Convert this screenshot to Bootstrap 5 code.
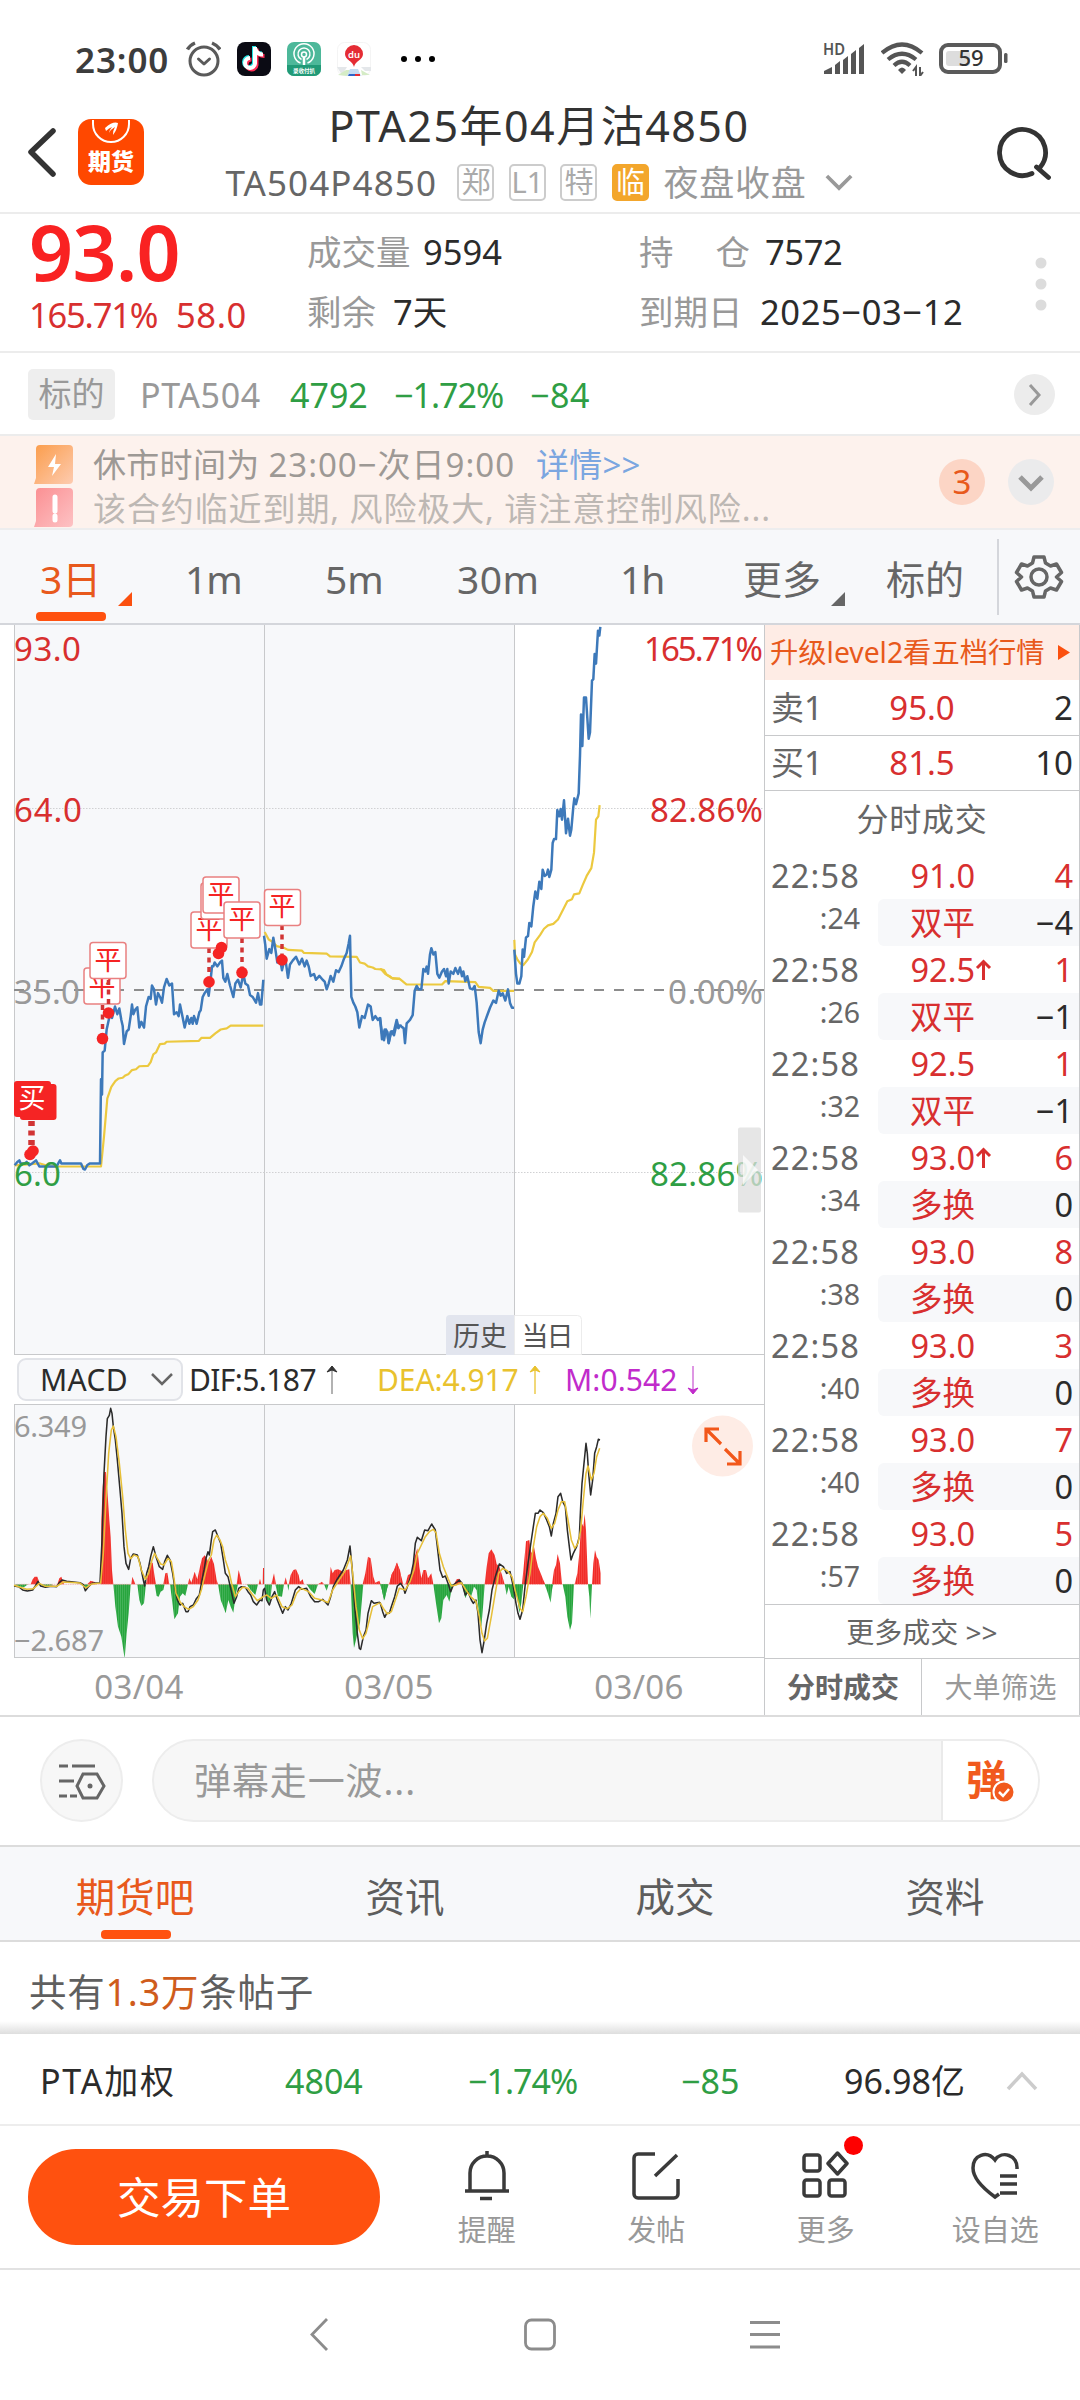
<!DOCTYPE html>
<html lang="zh-CN">
<head>
<meta charset="utf-8">
<meta name="viewport" content="width=device-width, initial-scale=1">
<title>PTA25年04月沽4850</title>
<link href="https://cdn.jsdelivr.net/npm/bootstrap@5.3.0/dist/css/bootstrap.min.css" rel="stylesheet">
<style>
:root{--or:#fb500f;--red:#d82f2f;--gr:#2f9e44;--tx:#2b2b2b;--mid:#666;--dim:#999;--ln:#c8c9cb;--pale:#f7f8fa}
body{width:1080px;height:2400px;margin:0;background:#fff;color:var(--tx);font-family:"Noto Sans","Noto Sans CJK SC",sans-serif;overflow:hidden;line-height:1;white-space:nowrap}
svg{display:block;flex:none}
svg text{font-family:"Noto Sans","Noto Sans CJK SC",sans-serif}
.t-or{color:#e8591c}.t-red{color:var(--red)}.t-gr{color:var(--gr)}.t-mid{color:var(--mid)}.t-dim{color:var(--dim)}
.statusbar{height:96px;padding:22px 71px 0 75px}
.clock{font-size:35px;font-weight:600;color:#3c3c3c;width:111px;letter-spacing:.9px}
.titlebar{height:118px;padding:0 29px 0 27px;border-bottom:2px solid #ececec}
.titlebar .name{font-size:43px;height:60px;line-height:60px;color:#333;letter-spacing:1.5px}
.titlebar .sub{height:52px;font-size:35px;color:var(--mid)}
.tagbox{width:37px;height:37px;border:2px solid #ccc;border-radius:5px;font-size:29px;line-height:32px;color:#aaa;text-align:center;margin-right:14.5px}
.tagbox.hot{background:#f3a62c;border-color:#f3a62c;color:#fff}
.quote{height:139px;border-bottom:2px solid #ececec;padding:0 28px 0 29px}
.quote .q1{width:278px}.quote .q2{width:332px}
.big{font-size:77px;font-weight:600;color:#f92222;line-height:76px;height:76px;letter-spacing:-.6px}
.qline{height:60px;font-size:34.5px;display:flex;align-items:center}
.under{height:83px;padding:2px 25px 0 28px;border-bottom:2px solid #ececec;font-size:34px}
.tag-under{width:87px;height:51px;background:#eee;border-radius:5px;font-size:33px;line-height:50px;color:#999;text-align:center}
.notice{height:94px;background:#fdf2ed;border-bottom:2px solid #ededee;padding:5px 26px 0 34px;overflow:hidden;font-size:33px}
.notice .ln{height:47px}
.notice .ln+.ln{height:40px}
.rnd{width:46px;height:46px;border-radius:50%}
.periods{height:95px;background:var(--pale);border-bottom:2px solid #d4d6db;font-size:39px;color:var(--mid)}
.periods>div{height:100%;display:flex;align-items:center;position:relative;padding-top:3px}
.bar{position:absolute;height:9px;width:70px;border-radius:4px;background:#ff510f}
.tri{position:absolute;width:14px;height:14px;clip-path:polygon(100% 0,100% 100%,0 100%);background:#666;top:62px}
.chartcol{width:764px}
.ind{height:49px;font-size:30px}
.ind .pick{width:166px;height:43px;margin-left:17px;border:2px solid #e1e3e8;border-radius:9px;background:var(--pale);padding:0 8px 0 21px}
.dates{height:57px;padding-left:14px;font-size:33px;color:var(--dim);letter-spacing:.3px}
.book{width:316px;border-left:1.5px solid var(--ln);border-right:1.5px solid var(--ln)}
.lvl{height:55px;background:#feece5;font-size:28.3px;padding:0 9px 0 5px}
.bk{height:55.5px;border-bottom:1.5px solid var(--ln);font-size:33px;padding:0 6px 0 6px}
.bk .w1{width:93px}.bk .w2{width:116px;text-align:center}
.tick{height:94px;font-size:32.5px}
.tick .tl{width:95px;margin-right:18px}
.tick .tr{flex:1}
.tick .hh{height:47px;line-height:47px}
.tick .ss{font-size:28.5px;height:47px;line-height:39px}
.tick .lo{background:var(--pale);border-radius:6px 0 0 6px}
.tick .p{width:97px;text-align:right}
.tick .q{padding-right:6px;color:var(--tx)}
.tick .q.buy{color:var(--red)}
.book .foot{height:57px;font-size:28px}
.danmu{height:132px;border-top:2px solid #dcdcdc;border-bottom:2px solid #dcdcdc;padding:0 40px 1px 40px}
.dm-c{width:83px;height:83px;border:2px solid #ededed;border-radius:50%;background:#f7f7f7;padding:0}
.dm-i{width:888px;height:83px;border:2px solid #ededed;border-radius:42px;background:#f7f7f7;overflow:hidden;margin-left:29px;font-size:37px;color:#999}
.dm-i .send{width:97px;background:#fff;border-left:2px solid #eaeaea}
.subtabs{height:95px;background:var(--pale);border-bottom:2px solid #dcdcdc;font-size:39.5px;color:#5d5d5d}
.subtabs>div{position:relative;width:270px;text-align:center;line-height:100px}
.posts{height:92px;padding:0 29px;font-size:37.5px;line-height:100px;color:#5f5f5f;letter-spacing:.8px;background:linear-gradient(#fff 86%,#dedede)}
.wtd{height:92px;border-bottom:2px solid #ededed;font-size:34px;color:#2b2b2b;padding:3px 0 0 40px}
.acts{height:144px;border-bottom:2px solid #e2e2e2;padding-left:28px}
.order{width:352px;height:96px;border-radius:48px;background:#ff510f;color:#fff;font-size:43.5px;border:0;padding:0;line-height:95px;margin-right:22px}
.act{width:169.5px;font-size:29px;color:#999;position:relative}
.act .lab{margin-top:15px;line-height:28px}
.dotred{position:absolute;width:19px;height:19px;border-radius:50%;background:#fe0000;left:103px;top:-15px}
</style>
<script src="https://cdn.jsdelivr.net/npm/bootstrap@5.3.0/dist/js/bootstrap.bundle.min.js"></script>
</head>
<body>
<!-- status bar -->
<div class="statusbar d-flex align-items-center">
  <div class="clock">23:00</div>
  <svg width="35" height="36" viewBox="0 0 35 36" fill="none" stroke="#5a5a5a" stroke-width="3"><circle cx="18" cy="20" r="14"/><path d="M1.500 8.500Q4 4 9 2M34 8.500Q31 4 26 2" stroke-width="3.500"/><path d="M12.500 18l5.500 5 5.500-5" stroke-linecap="round" stroke-linejoin="round"/></svg>
  <svg class="ms-3" width="34" height="34" viewBox="0 0 34 34"><rect width="34" height="34" rx="8" fill="#0b0b14"/><g fill="none" stroke-width="4"><path d="M18 5v16.500a5 5 0 1 1-5-5.500M18 6c1 4 4 6.500 8 6.500" stroke="#25e5e5" transform="translate(-1 -1)"/><path d="M18 5v16.500a5 5 0 1 1-5-5.500M18 6c1 4 4 6.500 8 6.500" stroke="#fe2c55" transform="translate(1.500 1.500)"/><path d="M18 5v16.500a5 5 0 1 1-5-5.500M18 6c1 4 4 6.500 8 6.500" stroke="#fff"/></g></svg>
  <svg class="ms-3" width="34" height="34" viewBox="0 0 34 34"><rect width="34" height="34" rx="7" fill="#4db89a"/><path d="M0 23h34v4a7 7 0 0 1-7 7H7a7 7 0 0 1-7-7z" fill="#219a77"/><g fill="none" stroke="#fff" stroke-width="1.500"><path d="M13.500 21a10 10 0 1 1 7 0M14.500 17.500a6 6 0 1 1 5 0"/><circle cx="17" cy="12.500" r="2.500"/><path d="M17 15v8" stroke-width="2.500"/></g><text x="17" y="31" font-size="5.500" font-weight="700" text-anchor="middle" fill="#fff">录收付扒</text></svg>
  <svg class="ms-3" width="34" height="34" viewBox="0 0 34 34"><rect x=".5" y=".5" width="33" height="33" rx="7" fill="#fff" stroke="#f4f4f4"/><path d="M0 25h10l-5 8zM24 25h10v4H28z" fill="#e4e7ea"/><path d="M1 33l8-5h4l-3 6zM24 28l9 5h-8z" fill="#d5ecc6"/><path d="M13 27h8l3 7H10z" fill="#c4dcf3"/><path d="M12 32h6v2h-7z" fill="#2f65c9"/><path d="M18 32h5v2h-5z" fill="#e52c34"/><path d="M17 25c-1-6-9-7-9-13a9 9 0 0 1 18 0c0 6-8 7-9 13z" fill="#e52c34"/><text x="17" y="16" font-size="9.500" font-weight="600" text-anchor="middle" fill="#fff">du</text></svg>
  <svg width="38" height="8" viewBox="0 0 38 8" style="margin-left:28px" fill="#000"><circle cx="5" cy="4" r="3"/><circle cx="19" cy="4" r="3"/><circle cx="33" cy="4" r="3"/></svg>
  <div class="ms-auto d-flex align-items-center">
    <svg width="42" height="36" viewBox="0 -2 42 36" fill="#555"><text x="0" y="12" font-size="15.500" font-weight="600" textLength="22" lengthAdjust="spacingAndGlyphs">HD</text><path d="M1 31v-3l8-4v7zM12 31V22l5-4v13zM20 31V17l5-4v18zM28 31V11l5-4v24zM36 31V5l5-4v30z"/></svg>
    <svg class="ms-3" width="43" height="34" viewBox="0 0 43 34" fill="none" stroke="#555" stroke-width="4.200"><path d="M1 11Q21 -6 41 11M7 17.500Q21 6 35 17.500M13 23.500Q21 16 29 23.500"/><path d="M17 28q4-5 8 0l-4 4z" fill="#555" stroke="none"/><path d="M35 34v-9l-3 4M39 25v9l3-4" stroke-width="2"/></svg>
    <svg width="70" height="32" viewBox="0 0 70 32" style="margin-left:15px"><rect x="2" y="2" width="59" height="27" rx="7" fill="#fff" stroke="#5a5a5a" stroke-width="4"/><rect x="7" y="8" width="24" height="15" rx="3" fill="#ddd"/><rect x="65" y="10" width="3.500" height="10" rx="1.500" fill="#5a5a5a"/><text x="32" y="23" font-size="22" text-anchor="middle" fill="#333" font-weight="500">59</text></svg>
  </div>
</div>
<!-- title bar -->
<div class="titlebar d-flex justify-content-between">
  <div class="d-flex" style="width:200px;padding-top:23px">
    <svg width="30" height="52" viewBox="0 0 30 52" class="mt-2" fill="none" stroke="#333" stroke-width="5.500" stroke-linecap="round" stroke-linejoin="round"><path d="M26 4L4 25l22 22"/></svg>
    <svg width="66" height="66" viewBox="0 0 66 66" style="margin-left:21px"><rect width="66" height="66" rx="13" fill="#ff4800"/><path d="M15 1v4a18 18 0 0 0 36 0V1" fill="none" stroke="#fff" stroke-width="2"/><path d="M27 9q8-7 13-5-1 7-5 12 0-5 2-8-4 2-6 6 1-4 3-6-3 1-6 4z" fill="#fff"/><text x="33" y="51" font-size="23" font-weight="800" textLength="46" text-anchor="middle" fill="#fff">期货</text></svg>
  </div>
  <div class="text-center">
    <div class="name">PTA25年04月沽4850</div>
    <div class="sub d-flex align-items-center"><span style="width:232px;text-align:left;letter-spacing:1.100px">TA504P4850</span><span class="tagbox">郑</span><span class="tagbox">L1</span><span class="tagbox">特</span><span class="tagbox hot">临</span><span class="t-dim" style="letter-spacing:.8px">夜盘收盘</span>
    <svg width="28" height="17" viewBox="0 0 30 18" style="margin-left:18px" fill="none" stroke="#999" stroke-width="4"><path d="M2 2l13 13L28 2"/></svg></div>
  </div>
  <div class="d-flex justify-content-end" style="width:200px;padding-top:31px"><svg width="52" height="54" viewBox="0 0 52 54" overflow="visible" fill="none" stroke="#333" stroke-width="4.800" stroke-linecap="round"><path d="M33 46.500A23 23 0 1 1 41 40.500M37.500 40L49.500 50.500"/></svg></div>
</div>
<!-- quote summary -->
<div class="quote d-flex">
  <div class="q1"><div class="big">93.0</div><div class="t-red d-flex align-items-center" style="height:50px;font-size:34.500px"><span style="width:147px;letter-spacing:-1.200px">165.71%</span><span style="letter-spacing:.6px">58.0</span></div></div>
  <div class="q2 pt-2"><div class="qline"><span class="t-dim" style="width:116px">成交量</span>9594</div><div class="qline"><span class="t-dim" style="width:86px">剩余</span>7天</div></div>
  <div class="pt-2"><div class="qline"><span class="t-dim d-flex justify-content-between" style="width:111px"><span>持</span><span>仓</span></span><span style="margin-left:15px;letter-spacing:-.4px">7572</span></div><div class="qline"><span class="t-dim" style="width:121px">到期日</span><span style="letter-spacing:.6px">2025−03−12</span></div></div>
  <svg class="ms-auto" width="20" height="138" viewBox="0 0 20 138" fill="#dcdcdc"><circle cx="9" cy="49" r="5.500"/><circle cx="9" cy="70" r="5.500"/><circle cx="9" cy="91" r="5.500"/></svg>
</div>
<!-- underlying -->
<div class="under d-flex align-items-center">
  <span class="tag-under">标的</span><span class="t-dim" style="margin-left:25px;width:150px;letter-spacing:.6px">PTA504</span><span class="t-gr" style="width:104px">4792</span><span class="t-gr" style="width:136px;letter-spacing:-1px">−1.72%</span><span class="t-gr" style="letter-spacing:.5px">−84</span>
  <svg class="ms-auto" width="41" height="41" viewBox="0 0 41 41"><circle cx="20.500" cy="20.500" r="20.500" fill="#ececec"/><path d="M16 11l9 10-9 10" fill="none" stroke="#999" stroke-width="3"/></svg>
</div>
<!-- notices -->
<div class="notice d-flex">
  <div class="flex-grow-1">
    <div class="ln d-flex align-items-center"><svg width="40" height="40" viewBox="0 0 40 40"><defs><linearGradient id="ga" x2="1" y2="1"><stop stop-color="#fb9d4b"/><stop offset="1" stop-color="#fdcbb0"/></linearGradient><linearGradient id="gb" x2="1" y2="1"><stop stop-color="#fb8f92"/><stop offset="1" stop-color="#fdc2c4"/></linearGradient></defs><path d="M6 0h29a4 4 0 0 1 4 4v31a4 4 0 0 1-4 4H0l2-6V4a4 4 0 0 1 4-4z" fill="url(#ga)"/><path d="M22 9l-8 13h6l-2 9 9-12h-6z" fill="#fff"/></svg>
      <span style="margin-left:19px;color:#9d9995;letter-spacing:.3px">休市时间为 <span style="letter-spacing:1px">23:00−次日9:00</span></span><span style="color:#7ba6e0;margin-left:21px;letter-spacing:.2px">详情&gt;&gt;</span></div>
    <div class="ln d-flex align-items-center"><svg width="40" height="40" viewBox="0 0 40 40"><path d="M6 0h29a4 4 0 0 1 4 4v31a4 4 0 0 1-4 4H0l2-6V4a4 4 0 0 1 4-4z" fill="url(#gb)"/><path d="M21 9v14M21 28v4" stroke="#fff" stroke-width="5" stroke-linecap="round"/></svg>
      <span style="margin-left:19px;color:#bdb8b4;letter-spacing:.9px">该合约临近到期, 风险极大, 请注意控制风险...</span></div>
  </div>
  <div class="d-flex align-items-center" style="height:82px"><span class="rnd t-or text-center" style="background:#fcd5c5;line-height:45px">3</span>
  <svg width="46" height="46" viewBox="0 0 46 46" style="margin-left:23px"><circle cx="23" cy="23" r="23" fill="#ebebec"/><path d="M12 18l11 11 11-11" fill="none" stroke="#999" stroke-width="5"/></svg></div>
</div>
<!-- period tabs -->
<div class="periods d-flex">
  <div class="t-or" style="width:185px;padding-left:40px">3日<span class="tri" style="left:118px;background:var(--or)"></span><span class="bar" style="left:36px;bottom:2px"></span></div>
  <div style="width:140px;letter-spacing:-1px">1m</div><div style="width:132px">5m</div><div style="width:163px;letter-spacing:.4px">30m</div><div style="width:123px;letter-spacing:-1px">1h</div><div style="width:143px">更多<span class="tri" style="left:88px"></span></div><div style="width:111px">标的</div>
  <div class="flex-grow-1 justify-content-center pt-0"><svg width="83" height="76" viewBox="0 0 83 76" fill="none" stroke="#666" stroke-width="3.500"><path d="M1 0v76" stroke="#d4d6db" stroke-width="2"/><g transform="translate(42 38)"><path stroke-linejoin="round" d="M-5-20h10l1.500 6 5 3 6-2 5 8.500-5 4.500v0l5 4.500-5 8.500-6-2-5 3-1.500 6H-5l-1.500-6-5-3-6 2-5-8.500 5-4.500-5-4.500 5-8.500 6 2 5-3z"/><circle r="8"/></g></svg></div>
</div>
<!-- charts and order book -->
<div class="d-flex" style="height:1090px">
  <div class="chartcol">
    <svg width="764" height="730" viewBox="0 625 764 730" font-size="33">
      <rect x="14" y="625" width="500" height="730" fill="#f7f8fa"/>
      <g stroke="#c8c9cb" fill="none"><path d="M14.500 625v730M264.500 625v730M514.500 625v730M14 1354.500H764"/><path d="M14 808.500H764M14 1172.500H764" stroke-dasharray="1.500 1.500" stroke="#d0d1d3"/></g>
      <path d="M14 990H764" stroke="#8c8c8c" stroke-width="2" stroke-dasharray="10 10" fill="none"/>
      <g fill="none" stroke="#ecc93f" stroke-width="2.200" stroke-linejoin="round">
        <g transform="translate(0 620) scale(.33333 .3827)"><path vector-effect="non-scaling-stroke" d="M44 1425 120 1420 150 1428 303 1428 312 1350 322 1250 334 1220 346 1205 356 1198 368 1196 376 1190 386 1186 396 1176 408 1174 418 1166 444 1165 452 1155 460 1135 468 1130 480 1108 494 1107 500 1102 596 1100 604 1092 630 1092 646 1080 662 1070 680 1067 692 1060 790 1060M794 815 806 835 816 840 830 852 850 856 864 862 906 864 912 870 980 872 990 879 1070 880 1080 895 1094 898 1104 905 1118 908 1126 912 1144 913 1156 925 1168 930 1178 937 1200 937"/></g>
        <g transform="translate(380 620) scale(.33333 .48473)"><path vector-effect="non-scaling-stroke" d="M0 720 12 722 20 732 34 738 60 741 80 752 186 752 196 745 286 747 296 757 330 759 340 765 402 765M403 660 405 690 412 700 420 708 430 712 444 700 456 685 464 665 480 650 492 637 504 630 520 627 534 618 546 602 562 580 576 576 582 566 598 564 608 547 620 528 634 512 642 480 648 412 655 405 659 382"/></g>
      </g>
      <g fill="none" stroke="#3d79ba" stroke-width="2.500" stroke-linejoin="round">
        <g transform="translate(0 620) scale(.33333 .3827)"><path vector-effect="non-scaling-stroke" d="M44 1425 52 1416 58 1412 62 1420 74 1420 80 1416 88 1425 96 1420 108 1412 118 1428 170 1428 176 1418 180 1412 184 1420 243 1420 250 1434 255 1436 262 1424 270 1420 300 1420 303 1200 306 1240 308 1130 314 1125 320 1070 330 1030 336 1040 345 1010 352 1030 358 1015 364 1045 368 1060 372 1108 380 1075 386 1070 392 1035 396 1005 400 1030 406 1018 412 1012 418 1065 424 1050 432 1065 438 1010 446 985 452 990 456 955 462 965 468 1005 474 975 480 985 486 1000 492 960 500 938 508 955 516 950 522 1030 530 1025 536 1035 540 1005 546 1030 554 1065 562 1035 568 1055 574 1040 578 1055 582 1035 590 1055 598 1025 602 1020 608 985 614 975 622 965 626 982 632 940 636 905 640 905 644 895 652 905 660 895 666 890 670 935 676 945 682 925 690 955 700 985 706 950 714 940 722 960 730 925 736 950 744 955 750 980 758 985 768 1000 774 975 780 1005 784 1005 790 940M792 825 796 850 800 885 808 860 814 870 820 830 826 860 832 895 840 885 846 915 850 900 856 885 864 935 870 900 878 890 888 880 898 900 906 885 914 905 920 890 926 905 932 930 942 925 948 940 958 930 968 940 974 945 980 965 986 950 992 930 1000 945 1008 915 1016 920 1024 905 1032 885 1040 870 1046 845 1050 825 1054 985 1060 1000 1066 1010 1072 1025 1078 1065 1086 1035 1094 1040 1104 1005 1112 1010 1118 1045 1126 1035 1134 1045 1140 1040 1146 1080 1152 1098 1158 1070 1162 1080 1166 1105 1174 1075 1182 1085 1190 1055 1194 1065 1200 1058"/></g>
        <g transform="translate(380 620) scale(.33333 .48473)"><path vector-effect="non-scaling-stroke" d="M60 835 66 840 71 842 75 873 80 832 90 825 98 815 104 765 110 755 116 762 124 762 130 720 136 725 140 715 144 730 150 690 154 677 160 690 166 685 172 730 178 738 186 725 192 720 198 735 202 720 206 750 212 725 220 730 226 718 234 730 240 717 246 735 250 725 256 745 262 735 270 760 278 762 284 755 290 790 296 850 302 873 308 845 314 830 322 815 330 800 340 785 348 790 356 765 362 775 368 770 376 785 384 762 390 790 396 800 402 800M403 680 408 730 412 750 418 750 424 735 428 680 432 695 438 655 444 652 448 625 454 632 460 590 466 560 472 575 478 540 484 555 488 515 494 528 500 525 504 515 508 530 514 515 518 460 522 452 528 452 532 392 538 405 542 390 546 412 552 372 558 440 564 410 570 445 574 432 580 385 583 368 588 380 596 358 600 280 603 195 607 260 612 160 618 160 626 245 630 232 636 125 640 122 644 70 648 90 654 22 658 32 661 14M0 820 6 865 14 845 22 850 26 873 32 850 42 848 50 825 56 842 60 835"/></g>
      </g>
      <!-- trade markers -->
      <g font-size="27" text-anchor="middle" fill="#f52424">
        <path stroke="#d13434" stroke-width="3.500" stroke-dasharray="5 4.500" fill="none" d="M102.500 1005v34M30 1121v30M33 1121v30M209 948v34M220 918v34M242 938v34M282 925v34"/>
        <rect x="84" y="968" width="36" height="36" rx="3" fill="#fff" stroke="#e98080" stroke-width="1.500"/>
        <text x="102" y="996">平</text>
        <path d="M108.500 980v30" stroke="#d13434" stroke-width="3.500" stroke-dasharray="5 4.500"/>
        <rect x="90" y="942.500" width="36" height="36" rx="3" fill="#fff" stroke="#e98080" stroke-width="1.500"/><text x="108" y="970">平</text>
        <rect x="191" y="912" width="36" height="36" rx="3" fill="#fff" stroke="#e98080" stroke-width="1.500"/><text x="209" y="939">平</text>
        <rect x="201" y="883" width="36" height="36" rx="3" fill="#fff" stroke="#e98080" stroke-width="1.500"/>
        <rect x="203" y="877" width="36" height="36" rx="3" fill="#fff" stroke="#e98080" stroke-width="1.500"/><text x="221" y="904">平</text>
        <rect x="224" y="902" width="36" height="36" rx="3" fill="#fff" stroke="#e98080" stroke-width="1.500"/><text x="242" y="929">平</text>
        <rect x="264.500" y="889.500" width="36" height="36" rx="3" fill="#fff" stroke="#e98080" stroke-width="1.500"/><text x="282" y="916">平</text>
        <rect x="20" y="1084" width="36.500" height="36" rx="3"/><rect x="14" y="1081" width="37" height="36" rx="3"/><text x="32" y="1108" fill="#fff">买</text>
        <circle cx="102.500" cy="1038.600" r="5.800"/><circle cx="108.500" cy="1013" r="5.800"/><circle cx="209" cy="982" r="5.800"/><circle cx="218.500" cy="953.500" r="5.800"/><circle cx="221.500" cy="947.500" r="5.800"/><circle cx="242" cy="972.600" r="5.800"/><circle cx="282" cy="960" r="5.800"/><circle cx="30" cy="1154.500" r="5.800"/><circle cx="33" cy="1151" r="5.800"/>
      </g>
      <g fill="#d82f2f"><text x="14" y="661" textLength="67">93.0</text><text x="14" y="822" textLength="68">64.0</text><text x="644" y="661" textLength="119">165.71%</text><text x="650" y="822" textLength="113">82.86%</text></g>
      <g fill="#999"><text x="14" y="1004" textLength="66">35.0</text><text x="668" y="1004" textLength="95">0.00%</text></g>
      <g fill="#2f9e44"><text x="14" y="1186" textLength="47">6.0</text><text x="650" y="1186" textLength="113">82.86%</text></g>
      <rect x="738" y="1127.500" width="23" height="85" rx="2" fill="#dedede" opacity=".75"/><path d="M743 1155l15 15-15 15z" fill="#fff" opacity=".7"/>
      <path d="M514 1315h-64a4 4 0 0 0-4 4v36h68z" fill="#e2e5ee"/><path d="M514.500 1315.500h63a4 4 0 0 1 4 4v35h-67z" fill="#fff" stroke="#ececec"/>
      <g fill="#555" font-size="27" text-anchor="middle"><text x="480" y="1346" textLength="54">历史</text><text x="547.500" y="1346" textLength="52">当日</text></g>
    </svg>
    <div class="ind d-flex align-items-center">
      <div class="pick d-flex align-items-center justify-content-between"><span style="font-size:30px;letter-spacing:.3px">MACD</span><svg width="22" height="13" viewBox="0 0 22 13" fill="none" stroke="#666" stroke-width="2.500"><path d="M1 1l10 10L21 1"/></svg></div>
      <span style="margin-left:6px;width:134px;letter-spacing:-.6px">DIF:5.187</span><svg width="56" height="30" viewBox="0 0 56 30"><path d="M9 1v28" stroke="#999" stroke-width="1.500"/><path d="M4 7l5-6 5 6-5-2z" fill="#333" stroke="#333"/></svg>
      <span style="color:#e9c22e;margin-left:-2px;width:149px;letter-spacing:-.1px">DEA:4.917</span><svg width="39" height="30" viewBox="0 0 39 30"><path d="M9 1v28" stroke="#f0d46a" stroke-width="1.800"/><path d="M4 7l5-6 5 6-5-2z" fill="#e9c22e" stroke="#e9c22e"/></svg>
      <span style="color:#c12bcb;width:119px;letter-spacing:.1px">M:0.542</span><svg width="20" height="30" viewBox="0 0 20 30"><path d="M9 1v28" stroke="#db8ce0" stroke-width="1.800"/><path d="M4 23l5 6 5-6-5 2z" fill="#c12bcb" stroke="#c12bcb"/></svg>
    </div>
    <svg width="764" height="254" viewBox="0 1404 764 254">
      <defs><pattern id="hr" width="6.250" height="10" patternUnits="userSpaceOnUse"><path d="M0 0h6.250v10H0z" fill="#f7605a"/><path d="M0 0h4.800v10H0z" fill="#f12c28"/></pattern><pattern id="hg" width="6.250" height="10" patternUnits="userSpaceOnUse"><path d="M0 0h6.250v10H0z" fill="#54b969"/><path d="M0 0h4.800v10H0z" fill="#27a53d"/></pattern></defs>
      <rect x="14" y="1404" width="500" height="254" fill="#f7f8fa"/>
      <g transform="translate(0 1340) scale(.33333)">
        <path fill="url(#hr)" d="M92 733 98 718 104 710 112 710 120 733zM172 733 178 715 184 710 192 733zM262 733 272 722 284 726 290 733zM302 733 304 540 308 440 312 396 318 396 324 480 328 540 332 590 336 690 340 733zM394 733 397 710 402 722 406 733zM438 733 444 700 450 668 458 668 464 710 468 733zM490 733 496 700 502 698 508 733zM564 733 568 714 574 728 584 695 592 718 600 680 606 655 614 646 620 655 626 668 634 650 642 672 650 720 654 733zM710 733 716 690 720 705 726 733zM776 733 780 716 784 733zM788 733 789 684 792 684 792 733zM814 733 822 700 828 733zM852 733 857 712 862 733zM866 733 872 705 880 690 888 688 896 705 900 725 908 718 912 733zM954 733 966 725 972 733zM988 733 992 680 998 700 1004 690 1014 688 1030 695 1040 690 1048 688 1052 733zM1088 733 1096 700 1104 650 1112 655 1120 710 1126 728 1138 722 1142 733zM1168 733 1174 705 1182 690 1190 668 1200 690 1206 733z"/>
        <path fill="url(#hg)" d="M44 733 60 740 72 742 84 733zM120 733 130 740 146 738 160 733zM240 733 250 738 260 748 266 733zM340 733 346 800 354 860 364 890 370 930 374 956 380 880 386 820 392 733zM412 733 418 780 424 798 432 790 438 733zM464 733 470 768 476 770 482 755 490 750 494 733zM510 733 516 780 523 838 534 820 540 770 548 760 556 768 564 733zM654 733 662 780 670 800 677 820 685 780 692 800 700 818 708 760 714 733zM740 733 752 750 766 765 774 733zM794 733 800 780 806 795 812 770 816 733zM826 733 834 768 846 770 852 733zM862 733 865 752 868 733zM920 733 930 748 944 762 954 733zM972 733 980 752 986 733zM1052 733 1058 880 1062 924 1068 900 1074 870 1080 850 1084 800 1090 733zM1142 733 1150 770 1154 780 1160 750 1166 733z"/>
        <path d="M42 733H1802" stroke="#f0a0a0" stroke-width="2" stroke-dasharray="5 2"/>
      </g>
      <g transform="translate(380 1340) scale(.33333)">
        <path fill="url(#hr)" d="M76 733 84 705 96 700 104 650 112 625 118 680 124 715 130 690 138 690 144 715 154 700 160 733zM222 733 230 718 238 716 246 733zM314 733 320 680 326 640 334 628 344 645 350 672 358 680 366 705 374 733zM426 733 432 670 438 604 448 600 454 640 462 620 468 655 474 680 482 700 490 720 496 733zM516 733 522 690 528 675 533 642 540 670 546 733zM584 733 592 700 598 640 604 545 610 560 614 522 618 570 624 733zM636 733 640 670 645 630 650 650 656 660 662 700 662 733zM28 733 36 700 44 690 51 667 60 695 70 733z"/>
        <path fill="url(#hg)" d="M0 733 6 750 12 782 18 760 24 733zM160 733 168 790 177 850 184 835 190 780 200 765 208 785 216 745 222 733zM246 733 256 775 264 755 274 768 282 740 290 750 298 830 304 860 310 790 314 733zM374 733 380 765 386 740 394 770 402 778 410 760 418 820 424 790 430 733zM494 733 502 755 512 788 516 750 520 733zM548 733 556 770 562 830 570 870 576 850 582 733zM624 733 628 770 631 836 636 733z"/>
      </g>
      <path d="M14 1404.500H764M14 1657.500H764M14.500 1404v254M264.500 1404v254M514.500 1404v254" stroke="#c8c9cb" fill="none"/>
      <g fill="none" stroke-width="4.600" stroke-linejoin="round">
        <g transform="translate(0 1340) scale(.33333)">
          <path stroke="#2b2b2b" d="M42 738 56 740 68 750 82 753 98 750 106 738 114 724 122 738 136 742 154 739 170 740 178 728 186 720 200 724 240 728 250 734 256 752 264 742 276 730 300 728 306 600 312 400 318 290 322 236 328 226 332 205 336 220 340 260 346 300 352 360 360 450 366 520 372 620 378 670 386 688 392 655 400 642 412 645 420 670 430 720 434 738 440 700 446 680 452 650 460 620 468 650 478 680 488 688 494 665 502 646 510 660 518 700 524 740 532 780 540 795 548 790 558 815 564 815 570 800 580 795 588 778 598 765 606 720 612 690 618 655 624 635 628 645 634 600 638 575 646 570 652 585 662 610 670 660 676 700 684 710 692 745 702 790 710 770 716 745 724 740 736 742 744 755 752 765 760 785 770 795 780 780 786 782 790 750 794 745 800 780 808 795 816 770 824 755 832 780 840 800 848 820 856 800 864 810 874 790 886 750 896 740 906 748 920 745 932 770 944 785 956 785 968 778 984 795 992 770 1000 740 1010 720 1020 705 1030 690 1042 660 1050 618 1056 680 1064 800 1072 880 1078 925 1082 928 1090 890 1098 870 1104 820 1114 782 1122 790 1140 787"/>
          <path stroke="#e6bf38" d="M42 736 80 748 100 746 118 730 136 739 170 739 190 726 240 729 258 744 275 732 302 729 310 640 318 480 326 340 334 270 340 258 348 290 358 370 368 470 376 570 384 640 392 656 402 645 414 650 424 690 436 718 446 700 456 660 464 640 472 655 482 672 492 675 504 655 514 665 520 700 528 760 540 785 552 800 566 808 580 800 594 780 604 750 616 700 626 660 634 645 642 600 650 585 660 600 668 620 676 660 686 690 696 735 706 770 716 755 728 742 744 745 756 762 772 782 790 770 800 765 814 775 830 765 846 800 862 806 876 795 890 760 904 745 926 755 944 775 966 780 984 788 998 750 1016 722 1034 695 1052 648 1058 700 1068 800 1078 870 1088 896 1098 880 1108 840 1118 800 1140 788"/>
        </g>
        <g transform="translate(380 1340) scale(.33333)">
          <path stroke="#2b2b2b" d="M0 787 8 815 14 832 20 820 28 820 34 800 44 770 52 738 62 730 70 742 75 760 82 740 92 710 100 670 106 610 112 592 124 602 134 570 144 572 155 552 166 570 172 620 180 690 188 712 196 708 204 730 212 755 220 735 238 720 246 730 256 765 264 755 274 780 280 790 288 780 294 820 300 900 306 938 312 905 320 850 328 810 336 750 346 710 358 672 370 680 380 700 390 695 400 740 408 790 414 820 420 838 428 810 436 730 444 670 454 600 460 560 466 520 474 520 480 510 490 518 500 540 508 560 514 588 520 550 528 520 534 470 542 460 548 485 556 500 562 570 568 620 573 660 580 640 590 620 598 590 602 500 606 430 612 370 618 310 622 340 626 400 632 465 638 420 644 340 650 320 655 298 660 300"/>
          <path stroke="#e6bf38" d="M0 788 10 805 22 822 34 815 46 780 58 745 76 750 90 725 102 690 112 640 124 615 136 590 148 575 160 568 168 578 178 640 190 680 204 715 214 738 228 735 244 728 258 750 272 770 288 785 298 830 306 880 314 903 322 895 334 830 344 770 356 700 368 685 382 692 396 710 408 760 420 805 428 815 438 770 450 700 460 620 470 560 480 530 490 520 502 535 514 565 524 550 534 510 544 485 554 485 564 540 574 600 584 625 594 610 602 570 610 480 618 400 624 378 634 420 642 400 650 350 659 325"/>
        </g>
      </g>
      <g fill="#999" font-size="29"><text x="14" y="1437" textLength="73">6.349</text><text x="14" y="1651" textLength="90">−2.687</text></g>
      <circle cx="722.500" cy="1446" r="30.500" fill="#feece5"/><path d="M721 1444l-14-14M706 1442v-13h13M725 1449l14 14M740 1451v13h-13" fill="none" stroke="#f2571a" stroke-width="3.200"/>
    </svg>
    <div class="dates d-flex align-items-center text-center"><span style="width:250px">03/04</span><span style="width:250px">03/05</span><span style="width:250px">03/06</span></div>
  </div>
  <div class="book">
    <div class="lvl d-flex align-items-center justify-content-between"><span class="t-or">升级level2看五档行情</span><svg width="12" height="15" viewBox="0 0 12 15"><path d="M0 0l12 7.500L0 15z" fill="#fb500f"/></svg></div>
    <div class="bk d-flex align-items-center"><span class="w1 t-mid">卖1</span><span class="w2 t-red">95.0</span><span class="ms-auto">2</span></div>
    <div class="bk d-flex align-items-center"><span class="w1 t-mid">买1</span><span class="w2 t-red">81.5</span><span class="ms-auto">10</span></div>
    <div class="t-mid text-center" style="height:61px;line-height:56px;font-size:32px;letter-spacing:.8px">分时成交</div>
    <div id="ticks"></div>
    <div class="t-mid text-center" style="height:54px;line-height:54px;border-top:1.500px solid var(--ln);font-size:28px">更多成交 &gt;&gt;</div>
    <div class="foot d-flex align-items-center text-center" style="border-top:1.500px solid var(--ln)"><span class="w-50 t-mid fw-bold" style="border-right:1.500px solid var(--ln);line-height:56px">分时成交</span><span class="w-50 t-dim">大单筛选</span></div>
  </div>
</div>
<!-- bullet comments -->
<div class="danmu d-flex align-items-center">
  <div class="dm-c d-flex align-items-center justify-content-center"><svg width="48" height="38" viewBox="0 0 48 38" fill="none" stroke="#666" stroke-width="3"><path d="M1 4h9M14 4h23M1 19h15M1 34h8M12 34h7"/><path d="M25 12h14l7 12-7 12H25l-6-12z"/><circle cx="32" cy="24" r="2.500" fill="#666" stroke="none"/></svg></div>
  <div class="dm-i d-flex justify-content-between"><span style="padding-left:40px;line-height:80px;letter-spacing:.9px">弹幕走一波...</span>
    <div class="send d-flex align-items-center"><svg width="60" height="60" viewBox="0 -5 60 60" style="margin-left:18px"><text x="5" y="39" font-size="41" font-weight="700" fill="#f15a1d">弹</text><circle cx="43" cy="36" r="10.500" fill="#f15a1d" stroke="#fff" stroke-width="2"/><path d="M38 36l4 4 6-7" stroke="#fff" stroke-width="2.500" fill="none"/></svg></div></div>
</div>
<div class="subtabs d-flex"><div class="t-or">期货吧<span class="bar" style="left:101px;bottom:1px"></span></div><div>资讯</div><div>成交</div><div>资料</div></div>
<div class="posts">共有<span style="color:#cf5c1c">1.3万</span>条帖子</div>
<!-- weighted index strip -->
<div class="wtd d-flex align-items-center"><span style="width:245px;letter-spacing:1.800px">PTA加权</span><span class="t-gr" style="width:183px">4804</span><span class="t-gr" style="width:213px;letter-spacing:-1px">−1.74%</span><span class="t-gr" style="width:163px">−85</span><span style="width:162px">96.98亿</span><svg width="32" height="20" viewBox="0 0 32 20" fill="none" stroke="#ccc" stroke-width="3.500"><path d="M2 18L16 3l14 15"/></svg></div>
<!-- actions -->
<div class="acts d-flex align-items-center">
  <button class="btn order">交易下单</button>
  <div class="act d-flex flex-column align-items-center"><svg width="46" height="50" viewBox="0 0 46 50" fill="none" stroke="#3a3a3a" stroke-width="3.500"><path d="M23 0v5M6 40V22a17 17 0 0 1 34 0v18M1 40h44M16 47.500h12"/></svg><span class="lab">提醒</span></div>
  <div class="act d-flex flex-column align-items-center"><svg width="48" height="50" viewBox="0 0 48 50" fill="none" stroke="#3a3a3a" stroke-width="3.500"><path d="M23 3H6a4 4 0 0 0-4 4v36a4 4 0 0 0 4 4h36a4 4 0 0 0 4-4V28M23 25L45 4"/></svg><span class="lab">发帖</span></div>
  <div class="act d-flex flex-column align-items-center"><svg width="48" height="50" viewBox="1 0 48 50" fill="none" stroke="#3a3a3a" stroke-width="3.500"><rect x="3" y="4" width="16" height="16" rx="2.500"/><rect x="3" y="29" width="16" height="16" rx="2.500"/><rect x="28" y="29" width="16" height="16" rx="2.500"/><path d="M36.500 2l9.500 10.500-9.500 10.500L27 12.500z" stroke-linejoin="round"/></svg><span class="lab">更多</span><span class="dotred"></span></div>
  <div class="act d-flex flex-column align-items-center"><svg width="48" height="50" viewBox="0 0 48 50" fill="none" stroke="#3a3a3a" stroke-width="3.500"><path d="M46 18C47 4 31-1 24 9 16-1 2 4 2 17c0 11 11 21 22 29l4-3M29 25h17M29 33h17M29 42h17"/></svg><span class="lab">设自选</span></div>
</div>
<!-- system navigation -->
<div style="height:130px"><svg width="1080" height="130" viewBox="0 2270 1080 130" fill="none" stroke="#8c8c8c" stroke-width="2.800"><path d="M327 2319l-15 15.500 15 15.500M750 2322.500h30M750 2334.500h30M750 2347h30"/><rect x="525.500" y="2320" width="29" height="29" rx="6"/></svg></div>
<script>
const ticks=[["24","91.0","","4","双平","−4"],["26","92.5","↑","1","双平","−1"],["32","92.5","","1","双平","−1"],["34","93.0","↑","6","多换","0"],["38","93.0","","8","多换","0"],["40","93.0","","3","多换","0"],["40","93.0","","7","多换","0"],["57","93.0","","5","多换","0"]];
const up='<svg width="17" height="22" viewBox="0 0 17 22" fill="none" stroke="#d82f2f" stroke-width="3"><path d="M8.500 21V3M2 9l6.500-6.500L15 9"/></svg>';
document.getElementById("ticks").innerHTML=ticks.map(([s,p,a,q,k,d])=>`<div class="tick d-flex"><div class="tl t-mid text-end"><div class="hh" style="letter-spacing:1.200px">22:58</div><div class="ss">:${s}</div></div><div class="tr"><div class="d-flex hh t-red align-items-center"><span class="p">${p}</span>${a?up:""}<span class="q buy ms-auto">${q}</span></div><div class="d-flex hh lo"><span class="p t-red">${k}</span><span class="q ms-auto">${d}</span></div></div></div>`).join("");
</script>
</body>
</html>
